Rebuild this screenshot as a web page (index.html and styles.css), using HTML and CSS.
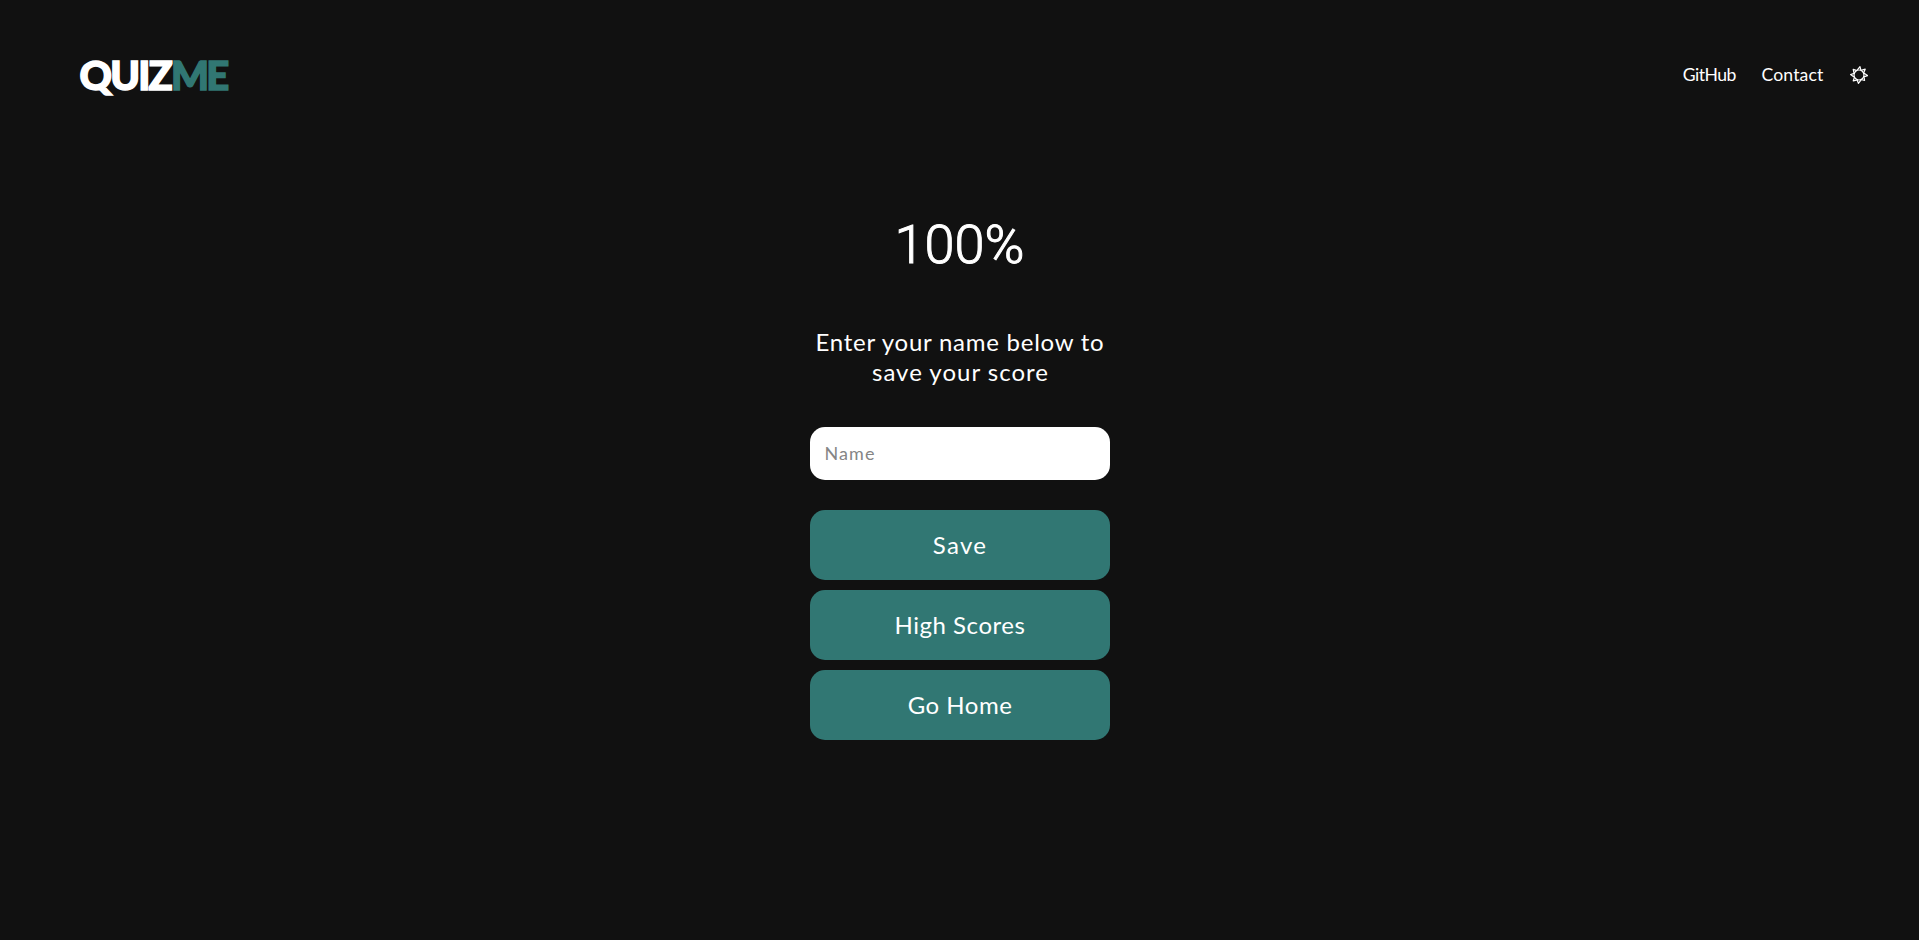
FILE: index.html
```html
<!DOCTYPE html>
<html lang="en">
<head>
<meta charset="utf-8">
<title>QuizMe</title>
<link rel="stylesheet" href="styles.css">
</head>
<body>
<header class="header">
  <div class="logo"><span class="logo-quiz">QUIZ</span><span class="logo-me">ME</span></div>
  <nav class="nav">
    <a class="link-github">GitHub</a>
    <a class="link-contact">Contact</a>
    <svg class="theme" viewBox="0 0 18 18" aria-hidden="true">
      <circle cx="9" cy="9" r="5"/>
      <path d="M7.2 4.2 10 .6 10.9 4.3M11.1 4.4 15.2 3.2 13.6 7M13.4 6.8 17.5 9.6 13.8 10.9M13.9 10.2 14.6 14.5 11.2 13.5M11.5 13.4 8.4 17.4 7.1 13.7M7.5 13.8 3.2 14.9 4.5 11.3M4.7 11.6.6 8.6 4.3 7.2M4.2 7.8 3.2 3.4 7 4.6"/>
    </svg>
  </nav>
</header>
<main class="result">
  <h1 class="score">100%</h1>
  <p class="prompt"><span class="prompt-first">Enter your name below to</span><br><span class="prompt-second">save your score</span></p>
  <input class="name" type="text" placeholder="Name">
  <button class="btn btn-save">Save</button>
  <button class="btn btn-scores">High Scores</button>
  <button class="btn btn-home">Go Home</button>
</main>
</body>
</html>
```
FILE: styles.css
```css
* { box-sizing: border-box; }
body {
  margin: 0;
  min-height: 100vh;
  background: #111;
  color: #fff;
  font-family: Lato, sans-serif;
}
.header {
  display: flex;
  justify-content: space-between;
  height: 150px;
  padding: 50px 50px 0 79.5px;
}
.logo {
  height: 50px;
  font-size: 40px;
  line-height: 50px;
  font-weight: 900;
  white-space: nowrap;
  -webkit-text-stroke: 1.5px currentColor;
}
.logo-quiz { letter-spacing: -1.8px; }
.logo-me { color: #317773; letter-spacing: -2.8px; }
.nav {
  display: flex;
  align-items: center;
  height: 49px;
  font-size: 17.6px;
}
.link-github { margin-right: 25.5px; letter-spacing: -0.5px; }
.link-contact { margin-right: 26.5px; letter-spacing: 0.15px; }
.theme {
  width: 18px;
  height: 18px;
  margin-right: 1px;
  fill: none;
  stroke: #fff;
  stroke-width: 1.2;
  stroke-linejoin: round;
}
.result {
  display: flex;
  flex-direction: column;
  align-items: center;
  width: 300px;
  margin: 0 auto;
  padding-top: 60px;
  text-align: center;
}
.score {
  margin: 0;
  font: 300 54px/70px Roboto, sans-serif;
  -webkit-text-stroke: 1px #fff;
}
.prompt {
  margin: 47px 0 40px;
  font-size: 24px;
  line-height: 30px;
  white-space: nowrap;
}
.prompt-first { margin-left: 1px; letter-spacing: 0.75px; }
.prompt-second { margin-left: 2px; letter-spacing: 1px; }
.name {
  width: 300px;
  height: 53px;
  margin: 0 0 30px;
  padding: 0 15px 1px;
  border: 0;
  border-radius: 15px;
  background: #fff;
  font: 400 18px Lato, sans-serif;
  letter-spacing: 1.1px;
}
.name::placeholder { color: #858585; }
.btn {
  width: 300px;
  height: 70px;
  margin: 0 0 10px;
  padding: 0 0 2px 1px;
  border: 0;
  border-radius: 15px;
  background: #317773;
  color: #fff;
  font: 400 24px Lato, sans-serif;
}
.btn-save { letter-spacing: 1.3px; }
.btn-scores { letter-spacing: 0.55px; }
.btn-home { letter-spacing: 0.5px; }
```
